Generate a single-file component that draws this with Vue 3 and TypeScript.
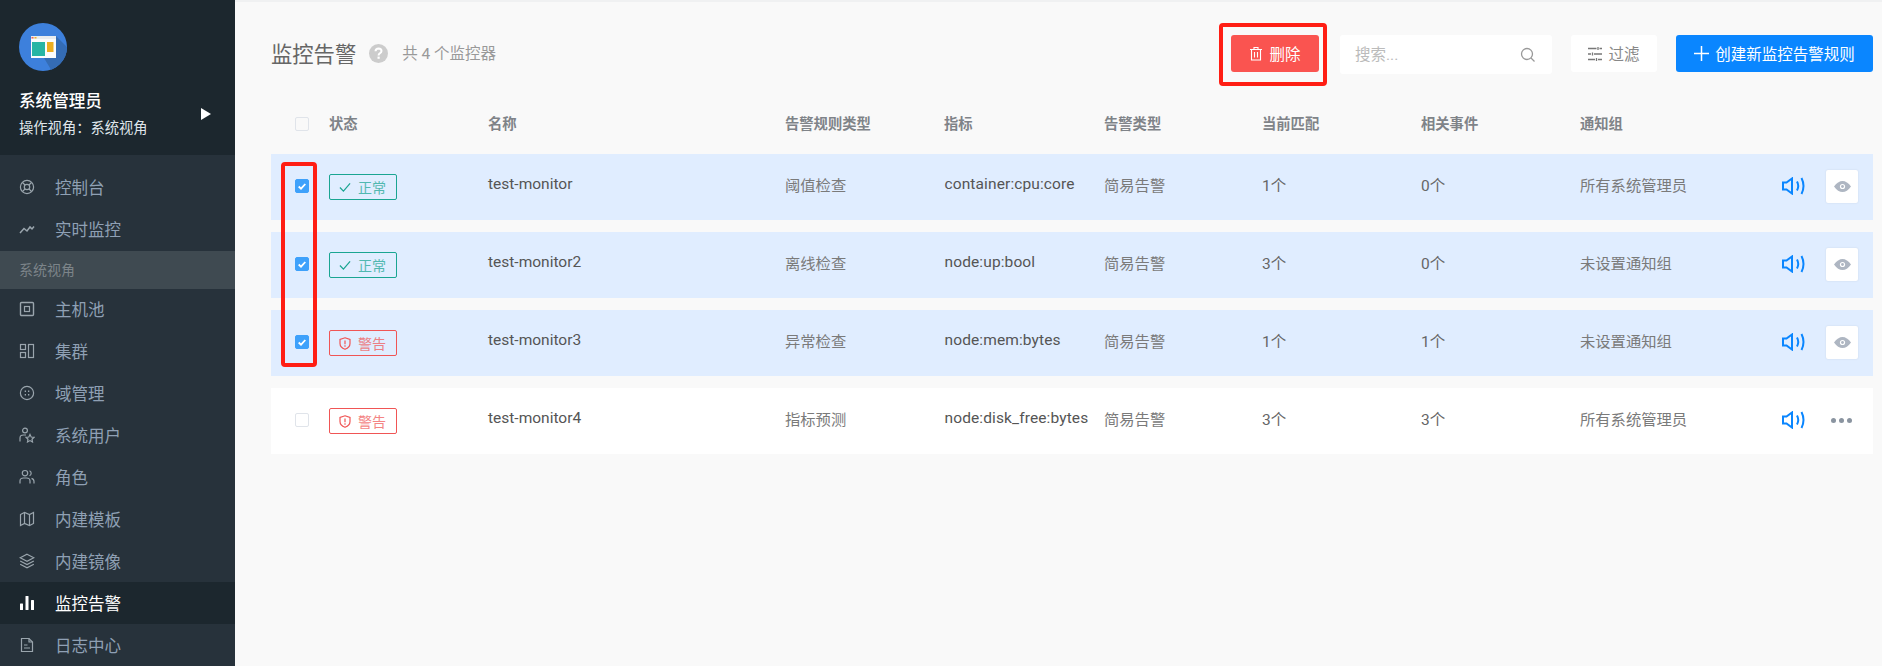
<script setup lang="ts">
interface MenuItem { label: string; icon: string; active?: boolean; section?: boolean }
interface Row { status: 'ok' | 'warn'; name: string; rule: string; metric: string; kind: string; match: string; events: string; group: string; checked: boolean }

const menu: MenuItem[] = [
  { label: '控制台', icon: 'console' },
  { label: '实时监控', icon: 'live' },
  { label: '系统视角', icon: '', section: true },
  { label: '主机池', icon: 'host' },
  { label: '集群', icon: 'cluster' },
  { label: '域管理', icon: 'domain' },
  { label: '系统用户', icon: 'user' },
  { label: '角色', icon: 'role' },
  { label: '内建模板', icon: 'template' },
  { label: '内建镜像', icon: 'image' },
  { label: '监控告警', icon: 'chart', active: true },
  { label: '日志中心', icon: 'log' }
]

const headers = ['状态', '名称', '告警规则类型', '指标', '告警类型', '当前匹配', '相关事件', '通知组']

const rows: Row[] = [
  { status: 'ok', name: 'test-monitor', rule: '阈值检查', metric: 'container:cpu:core', kind: '简易告警', match: '1个', events: '0个', group: '所有系统管理员', checked: true },
  { status: 'ok', name: 'test-monitor2', rule: '离线检查', metric: 'node:up:bool', kind: '简易告警', match: '3个', events: '0个', group: '未设置通知组', checked: true },
  { status: 'warn', name: 'test-monitor3', rule: '异常检查', metric: 'node:mem:bytes', kind: '简易告警', match: '1个', events: '1个', group: '未设置通知组', checked: true },
  { status: 'warn', name: 'test-monitor4', rule: '指标预测', metric: 'node:disk_free:bytes', kind: '简易告警', match: '3个', events: '3个', group: '所有系统管理员', checked: false }
]
</script>

<template>
  <div class="page">
    <aside class="side">
      <div class="profile">
        <svg class="logo" width="48" height="48" viewBox="0 0 48 48">
          <defs><clipPath id="logoClip"><circle cx="24" cy="24" r="24" /></clipPath></defs>
          <circle cx="24" cy="24" r="24" fill="#3d80dc" />
          <path d="M37 13 L60 36 L40 60 L25 35 L11 35 Z" fill="#346cb5" clip-path="url(#logoClip)" />
          <rect x="12" y="13" width="25" height="22" fill="#fbfcfc" />
          <rect x="12" y="13" width="25" height="3" fill="#e9ecef" />
          <rect x="12.500" y="14" width="2" height="1.5" fill="#f0605a" />
          <rect x="15.500" y="14" width="2" height="1.5" fill="#efb52c" />
          <rect x="13" y="19" width="13" height="14" fill="#27b5a4" />
          <rect x="28" y="19" width="6.500" height="10" fill="#ecae20" />
        </svg>
        <div class="who">
          <div>
            <div class="who-name">系统管理员</div>
            <div class="who-view">操作视角：系统视角</div>
          </div>
          <svg class="caret" width="10" height="12" viewBox="0 0 10 12"><path d="M0 0 L10 6 L0 12 Z" fill="#fff" /></svg>
        </div>
      </div>
      <nav class="menu">
        <template v-for="m in menu" :key="m.label">
          <div v-if="m.section" class="section">{{ m.label }}</div>
          <div v-else class="item" :class="{ active: m.active }">
            <svg class="mi" width="16" height="16" viewBox="0 0 16 16" fill="none" stroke="currentColor" stroke-width="1.2">
              <template v-if="m.icon === 'console'">
                <circle cx="8" cy="8" r="6.600" /><circle cx="8" cy="8" r="2.700" />
                <path d="M3.500 3.500 L6 6 M12.500 3.500 L10 6 M3.500 12.500 L6 10 M12.500 12.500 L10 10" />
              </template>
              <path v-else-if="m.icon === 'live'" d="M1 12 L5 7.500 L8 10 L11 6 L13 8 L15 5.500" stroke-width="1.500" />
              <template v-else-if="m.icon === 'host'">
                <rect x="1.500" y="1.500" width="13" height="13" rx="1" stroke-width="1.400" /><rect x="5.500" y="5.500" width="5" height="5" />
              </template>
              <template v-else-if="m.icon === 'cluster'">
                <rect x="1.500" y="1.500" width="5" height="5" /><rect x="1.500" y="9.500" width="5" height="5" /><rect x="9.500" y="1.500" width="5" height="13" />
              </template>
              <template v-else-if="m.icon === 'domain'">
                <circle cx="8" cy="8" r="6.600" />
                <path d="M5.700 6.300h1.300M9 6.300h1.300M5.700 9.700h1.300M9 9.700h1.300" stroke-width="1.600" />
              </template>
              <template v-else-if="m.icon === 'user'">
                <circle cx="6" cy="3.500" r="2.400" />
                <path d="M1 14.500 V11 Q1 8 4.500 8 H7" />
                <path d="M11 7.500 L12.200 10 L15 10.300 L13 12.200 L13.500 15 L11 13.600 L8.500 15 L9 12.200 L7 10.300 L9.800 10 Z" />
              </template>
              <template v-else-if="m.icon === 'role'">
                <circle cx="6" cy="4.200" r="2.700" />
                <path d="M1 14.500 V12 Q1 9 4.500 9 H7.500 Q11 9 11 12 V14.500 M10.500 1.700 A2.700 2.700 0 0 1 10.500 6.700 M12.500 9.300 Q15 10 15 12.500 V14.500" />
              </template>
              <template v-else-if="m.icon === 'template'">
                <path d="M1.500 3.500 L5.500 1.500 L10.500 3.500 L14.500 1.500 V12.500 L10.500 14.500 L5.500 12.500 L1.500 14.500 Z" />
                <path d="M5.500 2 V12.500 M10.500 3.500 V14" />
              </template>
              <template v-else-if="m.icon === 'image'">
                <path d="M8 1.200 L14.800 4.800 L8 8.400 L1.200 4.800 Z" />
                <path d="M1.200 8 L8 11.600 L14.800 8 M1.200 11.200 L8 14.800 L14.800 11.200" />
              </template>
              <template v-else-if="m.icon === 'chart'">
                <rect x="1" y="8.500" width="3" height="6.500" rx=".5" fill="currentColor" stroke="none" />
                <rect x="6.500" y="1" width="3" height="14" rx=".5" fill="currentColor" stroke="none" />
                <rect x="12" y="5" width="3" height="10" rx=".5" fill="currentColor" stroke="none" />
              </template>
              <template v-else-if="m.icon === 'log'">
                <path d="M2.500 1.500 H10 L13.500 5 V14.500 H2.500 Z" />
                <path d="M10 1.500 V5 H13.500 M5 8 H8.500 M5 11 H11" />
              </template>
            </svg>
            <span>{{ m.label }}</span>
          </div>
        </template>
      </nav>
    </aside>

    <main class="main">
      <header class="top">
        <h1 class="title">监控告警</h1>
        <svg class="help" width="19" height="19" viewBox="0 0 19 19">
          <circle cx="9.500" cy="9.500" r="9.500" fill="#ccc" />
          <path d="M6.500 7.300 Q6.700 4.500 9.600 4.500 Q12.500 4.600 12.500 7 Q12.500 8.500 10.800 9.400 Q9.600 10 9.600 11.400" fill="none" stroke="#fff" stroke-width="2" />
          <rect x="8.500" y="12.600" width="2.200" height="2.200" fill="#fff" />
        </svg>
        <span class="count">共 4 个监控器</span>
        <div class="spacer"></div>
        <button class="btn del">
          <svg width="14" height="15" viewBox="0 0 14 15" fill="none" stroke="#fff" stroke-width="1.100">
            <path d="M1 3.500 H13 M5 3.500 V1.500 H9 V3.500 M2.500 3.500 V14 H11.500 V3.500 M5.500 6 V11.500 M8.500 6 V11.500" />
          </svg>
          <span>删除</span>
        </button>
        <label class="search">
          <input class="search-input" placeholder="搜索..." />
          <svg width="16" height="16" viewBox="0 0 16 16" fill="none" stroke="#999" stroke-width="1.300">
            <circle cx="7" cy="7" r="5.500" /><path d="M11 11 L14.500 14.500" />
          </svg>
        </label>
        <button class="btn filter">
          <svg width="14" height="14" viewBox="0 0 14 14" fill="none" stroke="#777" stroke-width="1.300">
            <path d="M0 1.500 H8.500 M11.500 1.500 H14 M10 0 V3 M0 7 H3 M6 7 H14 M4.500 5.500 V8.500 M0 12.500 H7 M10 12.500 H14 M8.500 11 V14" />
          </svg>
          <span>过滤</span>
        </button>
        <button class="btn create">
          <svg width="15" height="15" viewBox="0 0 15 15" stroke="#fff" stroke-width="1.500"><path d="M7.500 0 V15 M0 7.500 H15" /></svg>
          <span>创建新监控告警规则</span>
        </button>
      </header>

      <div class="grid head">
        <span class="cb"></span>
        <span v-for="h in headers" :key="h" class="th">{{ h }}</span>
      </div>

      <div class="list">
        <div v-for="r in rows" :key="r.name" class="grid row" :class="{ selected: r.checked }">
          <span class="cb" :class="{ on: r.checked }">
            <svg v-if="r.checked" width="8" height="7" viewBox="0 0 8 7" fill="none" stroke="#fff" stroke-width="1.800"><path d="M.7 3.500 L3 5.700 L7.300 1" /></svg>
          </span>
          <span class="tag" :class="r.status">
            <svg v-if="r.status === 'ok'" width="12" height="11" viewBox="0 0 13 11" fill="none" stroke="currentColor" stroke-width="1.300"><path d="M1 5.500 L4.800 9.500 L12 1" /></svg>
            <svg v-else width="12" height="13" viewBox="0 0 12 13" fill="none" stroke="currentColor" stroke-width="1.200">
              <path d="M6 .8 L11 2.500 V6.500 Q11 10.500 6 12.300 Q1 10.500 1 6.500 V2.500 Z" /><path d="M6 3.500 V7.300 M6 8.300 V9.800" />
            </svg>
            <em>{{ r.status === 'ok' ? '正常' : '警告' }}</em>
          </span>
          <span class="cell">{{ r.name }}</span>
          <span class="cell soft">{{ r.rule }}</span>
          <span class="cell metric">{{ r.metric }}</span>
          <span class="cell soft">{{ r.kind }}</span>
          <span class="cell count-cell">{{ r.match }}</span>
          <span class="cell count-cell">{{ r.events }}</span>
          <span class="cell soft">{{ r.group }}</span>
          <span class="actions">
            <svg class="sound" width="23" height="18" viewBox="0 0 23 18" fill="none" stroke="#0a86ff" stroke-width="2">
              <path d="M1 5.500 H4.500 L10 1.500 V16.500 L4.500 12.500 H1 Z" />
              <path d="M15 4.500 Q17.500 9 15 13.500 M19.500 1 Q23.500 9 19.500 17" />
            </svg>
            <span v-if="r.checked" class="eye">
              <svg width="17" height="11" viewBox="0 0 17 11">
                <path d="M0 5.500 Q4 0 8.500 0 Q13 0 17 5.500 Q13 11 8.500 11 Q4 11 0 5.500 Z" fill="#aeb6c2" />
                <circle cx="8.500" cy="5.500" r="2.600" fill="#fff" /><circle cx="8.500" cy="5.500" r="1.400" fill="#aeb6c2" />
              </svg>
            </span>
            <span v-else class="dots"><i></i><i></i><i></i></span>
          </span>
        </div>
      </div>

      <div class="mark mark-del"></div>
      <div class="mark mark-checks"></div>
    </main>
  </div>
</template>

<style>
html, body { margin: 0; background: #f9f9f9; }
</style>

<style scoped>
.page {
  display: flex;
  width: 1882px;
  height: 666px;
  overflow: hidden;
  font-family: Roboto, "Noto Sans CJK SC", sans-serif;
  font-size: 15.5px;
  color: #555;
}
.side { width: 235px; flex: none; background: #27323b; color: #8fa0b4; }
.profile { height: 155px; box-sizing: border-box; padding: 23px 24px 0 19px; background: #1c272e; color: #fff; }
.logo { display: block; }
.who { display: flex; justify-content: space-between; align-items: center; margin-top: 19px; }
.who-name { font-size: 16.6px; line-height: 24px; font-weight: 500; }
.who-view { font-size: 14.3px; line-height: 22px; margin-top: 3px; color: #dfe5ea; }
.caret { margin-top: -2px; }
.menu { padding-top: 11px; }
.item { height: 42px; display: flex; align-items: center; padding-left: 19px; font-size: 16.5px; }
.item .mi { margin-right: 20px; flex: none; color: #9aa5ad; }
.item.active { background: #1c272e; color: #fff; }
.item.active .mi { color: #fff; }
.section {
  height: 38px;
  margin: 1px 0 -1px;
  line-height: 38px;
  padding-left: 19px;
  background: #3f4a51;
  color: #7c8489;
  font-size: 14px;
}
.main { position: relative; flex: 1; min-width: 0; padding: 0 9px 0 36px; box-sizing: border-box; background: #f9f9f9; }
.main::before { content: ""; position: absolute; left: 0; right: 0; top: 0; height: 2px; background: #f0f1f2; }
.top { display: flex; align-items: flex-start; height: 72px; padding-top: 35px; box-sizing: border-box; }
.title { margin: 7px 0 0 0; font-size: 21.3px; line-height: 26px; font-weight: 400; color: #666; }
.help { margin: 9px 0 0 13px; }
.count { margin: 9px 0 0 14px; line-height: 20px; color: #999; }
.spacer { flex: 1; }
.btn {
  display: flex;
  align-items: center;
  justify-content: center;
  gap: 6px;
  height: 37px;
  border: 0;
  border-radius: 3px;
  font: inherit;
  padding: 0;
}
.btn span { margin-top: -2px; }
.del { width: 88px; background: #fa5450; color: #fff; }
.search { display: flex; align-items: center; justify-content: space-between; width: 212px; height: 39px; margin-left: 21px; padding: 0 16px 0 15px; box-sizing: border-box; background: #fff; border-radius: 3px; }
.search-input { width: 120px; border: 0; outline: 0; padding: 0; font: inherit; background: transparent; }
.search-input::placeholder { color: #bbb; }
.filter { width: 86px; margin-left: 19px; background: #fff; color: #888; }
.create { width: 197px; margin-left: 19px; background: #0a86ff; color: #fff; }
.grid {
  display: grid;
  grid-template-columns: 34px 159px 297px 159px 160px 158px 159px 159px 202px 1fr;
  align-items: center;
  padding-left: 24px;
}
.head { height: 34px; margin-top: 34px; font-size: 14.3px; font-weight: 700; color: #7f8388; }
.head .cb { background: transparent; margin-top: 1px; }
.th { margin-top: -2px; }
.list { display: flex; flex-direction: column; gap: 12px; margin-top: 14px; }
.row { height: 66px; background: #fff; }
.row.selected { background: #e0edff; }
.cb { width: 14px; height: 14px; box-sizing: border-box; border: 1px solid #e0e4ea; border-radius: 2px; background: #fff; display: flex; align-items: center; justify-content: center; margin-top: -2px; }
.cb.on { background: #3ea1fb; border-color: #3ea1fb; }
.tag { display: flex; align-items: center; gap: 7px; width: 68px; height: 26px; padding-left: 9px; box-sizing: border-box; border: 1px solid; border-radius: 2px; font-size: 14px; }
.tag em { font-style: normal; opacity: .72; }
.tag.ok { color: #1aa592; }
.tag.warn { color: #f05555; }
.cell { padding-bottom: 6px; white-space: nowrap; }
.soft { font-size: 15.3px; color: #7a7a7a; }
.metric { letter-spacing: .12px; padding-left: 1px; margin-left: -0.5px; }
.count-cell { color: #666; }
.actions { display: flex; align-items: center; gap: 21px; margin-top: -2px; }
.sound { flex: none; }
.eye { display: flex; align-items: center; justify-content: center; width: 32px; height: 33px; box-sizing: border-box; background: #fff; border-radius: 2px; box-shadow: 0 0 2px rgba(0,0,0,.1); }
.dots { display: flex; gap: 3px; margin-left: 5px; }
.dots i { width: 5px; height: 5px; border-radius: 50%; background: #8a94a0; }
.mark { position: absolute; box-sizing: border-box; border: 4px solid #ff1e14; border-radius: 4px; pointer-events: none; }
.mark-del { left: 984px; top: 23px; width: 108px; height: 63px; }
.mark-checks { left: 46px; top: 162px; width: 36px; height: 205px; }
</style>
